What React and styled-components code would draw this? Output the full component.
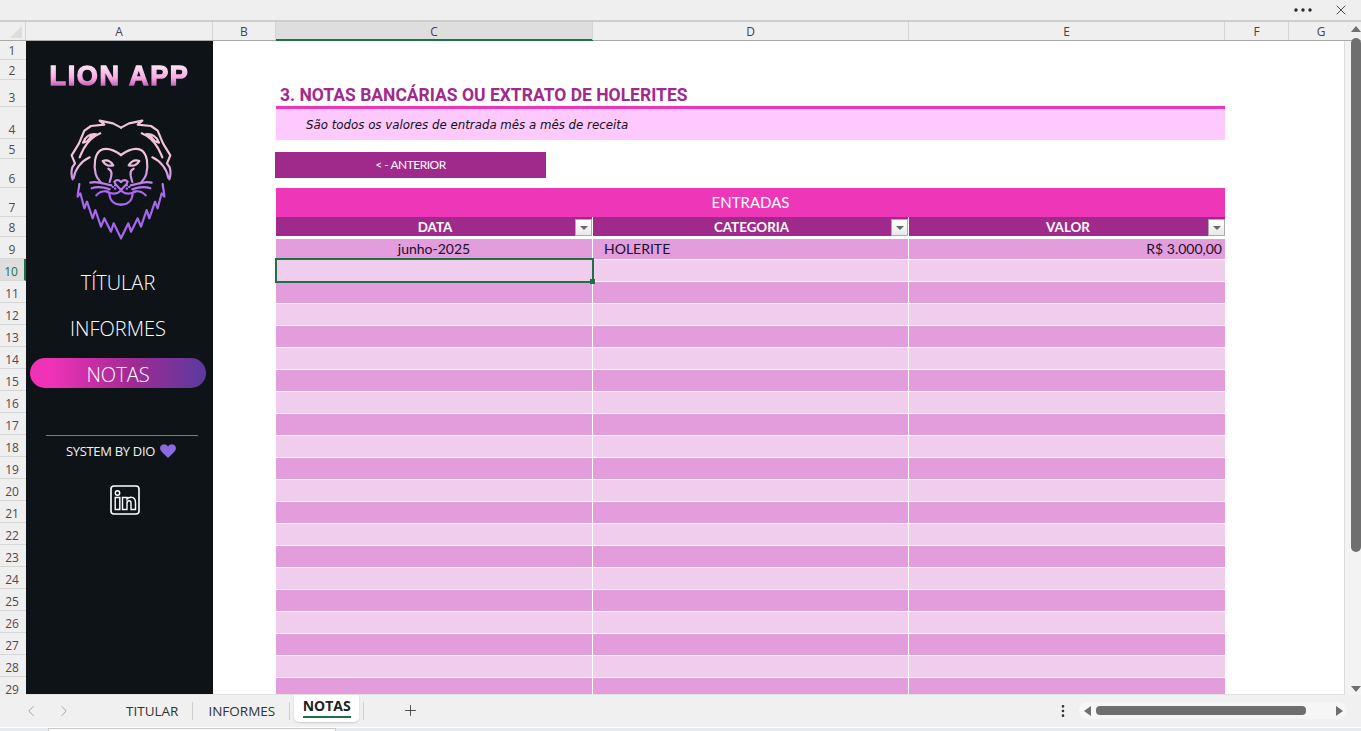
import React from 'react'
import styled, { createGlobalStyle } from 'styled-components'
import { ChevronLeft, ChevronRight, Ellipsis, EllipsisVertical, Plus, X } from 'lucide-react'

const COLUMNS = [
  { label: 'A', width: 187 },
  { label: 'B', width: 63 },
  { label: 'C', width: 317, selected: true },
  { label: 'D', width: 316 },
  { label: 'E', width: 316 },
  { label: 'F', width: 64 },
  { label: 'G', width: 64 },
]

const ROW_HEIGHTS = [19, 20, 27, 32, 20, 29, 29, 20, 22]
const ROWS = Array.from({ length: 29 }, (_, i) => ({
  label: i + 1,
  height: ROW_HEIGHTS[i] || 22,
  selected: i === 9,
}))
const BANDS = Array.from({ length: 20 }, (_, i) => i)

const LionHalf = () => (
  <>
    <path d="M210 53 L186 40 L146 32 L160 44 L120 48 L100 62 L84 100 L62 136 L72 160 L64 172 C60 185 61 197 65 208" />
    <path d="M96 98 C102 80 118 70 136 73 L112 92 M108 94 L118 82 L130 78 M112 92 L96 98" />
    <path d="M148 70 C128 78 112 92 98 116 C94 125 90 132 86 142" />
    <path d="M116 142 C90 154 72 178 68 204" />
    <path d="M210 135 C192 122 170 110 150 120 C130 132 128 165 134 192 C137 205 145 212 152 220" />
    <path d="M155 153 C170 147 180 155 187 166 C174 169 162 165 155 153 Z" />
    <path d="M172 176 C186 182 182 198 176 216" />
    <path d="M210 216 C202 208 196 209 190 215 C192 226 204 230 210 241" />
    <path d="M210 241 C198 255 178 252 166 245" />
    <path d="M210 284 C190 284 176 272 175 250" />
    <path d="M118 218 C140 212 160 222 181 226" />
    <path d="M122 235 C140 228 160 232 176 238" />
    <path d="M136 256 C145 246 160 242 172 245" />
    <path d="M185 231 h1 M192 226 h1 M192 236 h1" />
    <path d="M85 222 C84 236 80 248 80 260 L88 250 L100 295 L108 275 L125 325 L133 300 L150 350 L160 325 L180 365 L188 340 L210 385" />
  </>
)

const LionLogo = () => (
  <LogoSvg viewBox="0 0 420 405" width="140" height="135">
    <defs>
      <linearGradient id="maneGradient" gradientUnits="userSpaceOnUse" x1="0" y1="150" x2="0" y2="250">
        <stop offset="0" stopColor="#f2c4d8" />
        <stop offset="1" stopColor="#a766ee" />
      </linearGradient>
    </defs>
    <g fill="none" stroke="url(#maneGradient)" strokeWidth="6.5" strokeLinejoin="round" strokeLinecap="round">
      <LionHalf />
      <g transform="translate(420 0) scale(-1 1)">
        <LionHalf />
      </g>
    </g>
  </LogoSvg>
)

const LinkedInIcon = () => (
  <svg viewBox="0 0 30 30" width="30" height="30" fill="none" stroke="#fff" strokeWidth="1.4">
    <rect x="1" y="1" width="28" height="28" rx="3" strokeWidth="1.6" />
    <circle cx="7.5" cy="8" r="2.2" />
    <path d="M5.2 12.5 H9.8 V24.5 H5.2 Z" />
    <path d="M12.5 12.5 H17 V14.2 C18 12.8 19.4 12.2 21 12.2 C24 12.2 25.5 14.2 25.5 17.5 V24.5 H21 V18 C21 16.6 20.4 15.8 19.2 15.8 C18 15.8 17 16.6 17 18.2 V24.5 H12.5 Z" />
  </svg>
)

const Heart = () => (
  <svg viewBox="0 0 16 14" width="16" height="14">
    <path fill="#8a68e0" d="M8 14 L1.2 7.2 C-0.6 5.2 -0.2 2 2 0.8 C4 -0.3 6.6 0.3 8 2.4 C9.4 0.3 12 -0.3 14 0.8 C16.2 2 16.6 5.2 14.8 7.2 Z" />
  </svg>
)

const FilterButton = () => (
  <Filter>
    <FilterArrow />
  </Filter>
)

const App = () => (
  <Window>
    <GlobalStyle />
    <TopBar>
      <Ellipsis size={24} strokeWidth={1.4} color="#222" />
      <CloseIcon>
        <X size={16} strokeWidth={1.2} color="#222" />
      </CloseIcon>
    </TopBar>
    <ColumnBar>
      <Corner />
      {COLUMNS.map((col) => (
        <ColumnCell key={col.label} $width={col.width} $selected={col.selected}>
          {col.label}
        </ColumnCell>
      ))}
    </ColumnBar>
    <Body>
      <RowBar>
        {ROWS.map((row) => (
          <RowCell key={row.label} $height={row.height} $selected={row.selected}>
            {row.label}
          </RowCell>
        ))}
      </RowBar>
      <Sheet>
        <Sidebar>
          <Brand>LION APP</Brand>
          <LionLogo />
          <Nav>
            <NavItem>TÍTULAR</NavItem>
            <NavItem>INFORMES</NavItem>
            <NavItem $active>NOTAS</NavItem>
          </Nav>
          <Divider />
          <Credit>
            SYSTEM BY DIO <Heart />
          </Credit>
          <LinkedInWrap>
            <LinkedInIcon />
          </LinkedInWrap>
        </Sidebar>
        <Content>
          <Title>3. NOTAS BANCÁRIAS OU EXTRATO DE HOLERITES</Title>
          <Note>São todos os valores de entrada mês a mês de receita</Note>
          <BackButton>&lt; - ANTERIOR</BackButton>
          <TableTitle>ENTRADAS</TableTitle>
          <HeaderRow>
            <HeaderCell>
              DATA
              <FilterButton />
            </HeaderCell>
            <HeaderCell>
              CATEGORIA
              <FilterButton />
            </HeaderCell>
            <HeaderCell>
              VALOR
              <FilterButton />
            </HeaderCell>
          </HeaderRow>
          <DataRow $odd $first>
            <DataCell $align="center">junho-2025</DataCell>
            <DataCell $align="left">HOLERITE</DataCell>
            <DataCell $align="right">R$ 3.000,00</DataCell>
          </DataRow>
          {BANDS.map((i) => (
            <DataRow key={i} $odd={i % 2 === 1}>
              <DataCell>{i === 0 && <Selection />}</DataCell>
              <DataCell />
              <DataCell />
            </DataRow>
          ))}
        </Content>
      </Sheet>
      <VScroll>
        <ArrowUp />
        <VThumb />
        <ArrowDown />
      </VScroll>
    </Body>
    <TabBar>
      <TabNav>
        <ChevronLeft size={18} strokeWidth={1.3} color="#a5a5a5" />
        <ChevronRight size={18} strokeWidth={1.3} color="#a5a5a5" />
      </TabNav>
      <Tab>TITULAR</Tab>
      <TabSep />
      <Tab>INFORMES</Tab>
      <TabSep />
      <ActiveTab>NOTAS</ActiveTab>
      <TabSep />
      <AddTab>
        <Plus size={17} strokeWidth={1.2} color="#333" />
      </AddTab>
      <TabSpacer />
      <EllipsisVertical size={16} strokeWidth={2} color="#333" />
      <HScroll>
        <ArrowLeft />
        <HThumb />
        <ArrowRight />
      </HScroll>
    </TabBar>
    <TaskStrip>
      <TaskWindow />
    </TaskStrip>
  </Window>
)

const GlobalStyle = createGlobalStyle`
  html, body {
    margin: 0;
    padding: 0;
    overflow: hidden;
    background: #f0f0f0;
  }
  * {
    box-sizing: border-box;
  }
`

const Window = styled.div`
  width: 1361px;
  height: 731px;
  display: flex;
  flex-direction: column;
  overflow: hidden;
  background: #f0f0f0;
  font-family: 'Open Sans', 'Liberation Sans', sans-serif;
`

const TopBar = styled.div`
  height: 22px;
  flex: none;
  display: flex;
  align-items: center;
  justify-content: flex-end;
  padding: 0 12px 1px 0;
  background: #efefef;
  border-bottom: 2px solid #cdcdcd;
`

const CloseIcon = styled.div`
  display: flex;
  margin-left: 18px;
`

const ColumnBar = styled.div`
  height: 19px;
  flex: none;
  display: flex;
  background: #efefef;
  border-bottom: 1px solid #a9a9a9;
`

const Corner = styled.div`
  width: 26px;
  flex: none;
  position: relative;
  border-right: 1px solid #d4d4d4;
  &::after {
    content: '';
    position: absolute;
    right: 3px;
    bottom: 2px;
    border-style: solid;
    border-width: 0 0 12px 12px;
    border-color: transparent transparent #dcdcdc transparent;
  }
`

const ColumnCell = styled.div`
  width: ${(p) => p.$width}px;
  flex: none;
  display: flex;
  align-items: center;
  justify-content: center;
  font-size: 12px;
  color: #4d4049;
  border-right: 1px solid #d4d4d4;
  background: ${(p) => (p.$selected ? '#dedede' : 'transparent')};
  box-shadow: ${(p) => (p.$selected ? '0 1px 0 #1e7145, inset 0 -1px 0 #1e7145' : 'none')};
  &:last-child {
    border-right: 0;
  }
`

const Body = styled.div`
  height: 654px;
  flex: none;
  display: flex;
`

const RowBar = styled.div`
  width: 26px;
  flex: none;
  overflow: hidden;
  background: #efefef;
`

const RowCell = styled.div`
  height: ${(p) => p.$height}px;
  display: flex;
  align-items: flex-end;
  justify-content: center;
  padding: 0 2px 0 0;
  font-size: 12px;
  color: ${(p) => (p.$selected ? '#1e7145' : '#54484f')};
  background: ${(p) => (p.$selected ? '#dedede' : 'transparent')};
  border-bottom: 1px solid #d6d6d6;
  border-right: ${(p) => (p.$selected ? '2px solid #1e7145' : 'none')};
`

const Sheet = styled.div`
  width: 1319px;
  flex: none;
  display: flex;
  background: #fff;
  border-right: 1px solid #dcdcdc;
  border-bottom: 1px solid #e2e2e2;
  overflow: hidden;
`

const Sidebar = styled.div`
  width: 187px;
  flex: none;
  display: flex;
  flex-direction: column;
  align-items: center;
  padding: 18px 0 0;
  background: #0e1318;
  color: #fff;
`

const Brand = styled.div`
  height: 32px;
  padding-top: 1px;
  font-family: 'Liberation Sans', Arial, sans-serif;
  font-size: 27px;
  font-weight: 700;
  letter-spacing: 1.7px;
  line-height: 32px;
  -webkit-text-stroke: 1.3px transparent;
  background: linear-gradient(180deg, #fde4f2 20%, #f8a8e0 60%, #b04fb0 90%);
  -webkit-background-clip: text;
  background-clip: text;
  color: transparent;
`

const LogoSvg = styled.svg`
  display: block;
  margin-top: 19px;
  margin-left: 3px;
  flex: none;
`

const Nav = styled.div`
  align-self: stretch;
  display: flex;
  flex-direction: column;
  gap: 16px;
  margin-top: 21px;
  padding: 0 7px 0 4px;
`

const NavItem = styled.div`
  height: 30px;
  display: flex;
  align-items: center;
  justify-content: center;
  padding: 3px 0 0;
  font-family: 'Open Sans', sans-serif;
  font-size: 20px;
  font-weight: 300;
  color: #fff;
  border-radius: 15px;
  background: ${(p) =>
    p.$active
      ? 'linear-gradient(90deg, #f032b8 12%, #a02a94 58%, #5a3a9f 100%)'
      : 'transparent'};
`

const Divider = styled.div`
  width: 152px;
  height: 1px;
  margin-top: 47px;
  margin-left: 5px;
  background: #cf48a8;
`

const Credit = styled.div`
  display: flex;
  align-items: center;
  gap: 5px;
  margin-top: 7px;
  margin-left: 3px;
  height: 15px;
  font-family: 'Open Sans', sans-serif;
  font-size: 13px;
  letter-spacing: -0.32px;
  color: #f2f2f2;
`

const LinkedInWrap = styled.div`
  display: flex;
  margin-top: 27px;
  margin-left: 10px;
`

const Content = styled.div`
  width: 949px;
  margin-left: 63px;
  padding-top: 40px;
  flex: none;
  font-family: Lato, 'Open Sans', sans-serif;
`

const Title = styled.div`
  height: 28px;
  padding: 3px 0 0 4px;
  font-family: Roboto, 'Liberation Sans', sans-serif;
  font-size: 17.5px;
  font-weight: 700;
  line-height: 22px;
  color: #a02a8c;
  border-bottom: 3px solid #ee36b8;
`

const Note = styled.div`
  height: 31px;
  padding: 0 0 0 30px;
  display: flex;
  align-items: center;
  font-family: 'DejaVu Sans', Verdana, sans-serif;
  font-size: 11.8px;
  font-style: italic;
  color: #111;
  background: #fdc9fe;
`

const BackButton = styled.div`
  width: 271px;
  height: 26px;
  margin: 12px 0 10px -1px;
  padding: 0 0 2px 0;
  display: flex;
  align-items: center;
  justify-content: center;
  font-size: 12px;
  letter-spacing: -0.5px;
  color: #fff;
  background: #a02a8c;
`

const TableTitle = styled.div`
  height: 29px;
  display: flex;
  align-items: center;
  justify-content: center;
  padding-bottom: 2px;
  font-size: 15px;
  color: #fff;
  background: #ee36b8;
`

const HeaderRow = styled.div`
  height: 19px;
  display: grid;
  grid-template-columns: 317px 316px 316px;
  margin-bottom: 3px;
`

const HeaderCell = styled.div`
  position: relative;
  display: flex;
  align-items: center;
  justify-content: center;
  padding-left: 2px;
  font-size: 13.4px;
  font-weight: 700;
  color: #fff;
  background: #a02a8c;
  border-right: 1px solid #fff;
  &:last-child {
    border-right: 0;
  }
`

const Filter = styled.span`
  position: absolute;
  right: 0;
  bottom: 0;
  width: 17px;
  height: 17px;
  display: flex;
  align-items: center;
  justify-content: center;
  background: linear-gradient(180deg, #fff, #e8e8e8);
  border: 1px solid #ababab;
`

const FilterArrow = styled.span`
  width: 0;
  height: 0;
  border-style: solid;
  border-width: 4px 4px 0;
  border-color: #666 transparent transparent;
`

const DataRow = styled.div`
  height: ${(p) => (p.$first ? 21 : 22)}px;
  display: grid;
  grid-template-columns: 317px 316px 316px;
  background: ${(p) => (p.$odd ? '#e39cdc' : '#f1cded')};
  border-bottom: 1px solid #fff;
`

const DataCell = styled.div`
  position: relative;
  padding: 0 3px 0 ${(p) => (p.$align === 'left' ? '11px' : '3px')};
  font-size: 14px;
  line-height: 20px;
  color: #17102c;
  text-align: ${(p) => p.$align || 'left'};
  border-right: 1px solid #fff;
  &:last-child {
    border-right: 0;
  }
`

const Selection = styled.div`
  position: absolute;
  z-index: 2;
  left: -1px;
  top: -2px;
  width: 319px;
  height: 25px;
  border: 2px solid #1e7145;
  &::after {
    content: '';
    position: absolute;
    right: -3px;
    bottom: -3px;
    width: 5px;
    height: 5px;
    background: #1e7145;
  }
`

const VScroll = styled.div`
  width: 16px;
  flex: none;
  position: relative;
  background: #f3f3f3;
`

const VThumb = styled.div`
  position: absolute;
  left: 6px;
  top: -3px;
  width: 10px;
  height: 514px;
  border-radius: 5px;
  background: #6f6f6f;
`

const ArrowUp = styled.div`
  position: absolute;
  left: 6px;
  top: -15px;
  border-style: solid;
  border-width: 0 5px 6px;
  border-color: transparent transparent #6f6f6f;
`

const ArrowDown = styled.div`
  position: absolute;
  left: 6px;
  bottom: 3px;
  border-style: solid;
  border-width: 6px 5px 0;
  border-color: #6f6f6f transparent transparent;
`

const TabBar = styled.div`
  height: 32px;
  flex: none;
  display: flex;
  align-items: center;
  padding: 0 14px 1px 0;
  background: #f0f0f0;
`

const TabNav = styled.div`
  width: 111px;
  flex: none;
  display: flex;
  gap: 15px;
  padding-left: 22px;
`

const Tab = styled.div`
  padding: 0 14px 0 15px;
  font-size: 13.5px;
  color: #333;
`

const TabSep = styled.div`
  width: 1px;
  height: 18px;
  flex: none;
  background: #cfcfcf;
`

const ActiveTab = styled.div`
  width: 65px;
  height: 27px;
  margin: -4px 4px 0 4px;
  padding: 0 8px;
  display: flex;
  flex-direction: column;
  align-items: center;
  font-size: 14px;
  font-weight: 700;
  line-height: 21px;
  color: #222;
  background: #fff;
  border-radius: 0 0 5px 5px;
  box-shadow: 0 1px 2px rgba(0, 0, 0, 0.15);
  &::after {
    content: '';
    width: 48px;
    height: 2px;
    flex: none;
    background: #1e7145;
  }
`

const AddTab = styled.div`
  display: flex;
  margin-left: 38px;
`

const TabSpacer = styled.div`
  flex: 1;
`

const HScroll = styled.div`
  width: 268px;
  height: 17px;
  margin-left: 8px;
  flex: none;
  position: relative;
  background: #f6f6f6;
  border-radius: 8px;
`

const HThumb = styled.div`
  position: absolute;
  left: 17px;
  top: 4px;
  width: 210px;
  height: 9px;
  border-radius: 4px;
  background: #6f6f6f;
`

const ArrowLeft = styled.div`
  position: absolute;
  left: 5px;
  top: 4px;
  border-style: solid;
  border-width: 5px 7px 5px 0;
  border-color: transparent #6f6f6f transparent transparent;
`

const ArrowRight = styled.div`
  position: absolute;
  right: 4px;
  top: 4px;
  border-style: solid;
  border-width: 5px 0 5px 7px;
  border-color: transparent transparent transparent #6f6f6f;
`

const TaskStrip = styled.div`
  flex: 1;
  padding-left: 48px;
  background: #e4ebf3;
  border-top: 1px solid #fff;
`

const TaskWindow = styled.div`
  width: 288px;
  height: 10px;
  background: #fff;
  border: 1px solid #c8c8c8;
`

export default App
